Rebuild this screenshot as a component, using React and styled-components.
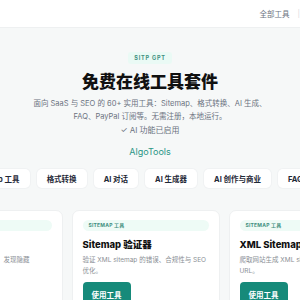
import React from "react";
import styled, { createGlobalStyle } from "styled-components";

const GlobalStyle = createGlobalStyle`
  html, body {
    margin: 0;
    padding: 0;
    background: #f6f8f8;
    font-family: Inter, "Noto Sans CJK SC", sans-serif;
    color: #111827;
  }
  #root {
    overflow: hidden;
    width: 300px;
    height: 300px;
  }
`;

const Header = styled.header`
  height: 27px;
  background: #ffffff;
  border-bottom: 1px solid #eef0f1;
  display: flex;
  align-items: center;
  justify-content: flex-end;
  gap: 8px;
  overflow: hidden;
`;

const NavLink = styled.a`
  font-size: 7.5px;
  color: ${(p) => (p.faint ? "#dadde0" : "#6b7280")};
  text-decoration: none;
  white-space: nowrap;
`;

const Hero = styled.section`
  display: flex;
  flex-direction: column;
  align-items: center;
  padding-top: 24px;
`;

const Badge = styled.span`
  background: #eafaf5;
  color: #3f8f80;
  font-size: 5.5px;
  font-weight: 700;
  letter-spacing: 0.8px;
  padding: 3px 6px;
  border-radius: 3px;
`;

const Title = styled.h1`
  margin: 4px 0 0;
  font-size: 17px;
  font-weight: 800;
  color: #111111;
`;

const Subtitle = styled.p`
  margin: 5px 0 0;
  max-width: 242px;
  text-align: center;
  font-size: 7.5px;
  line-height: 12.5px;
  color: #6b7280;
`;

const Status = styled.div`
  margin-top: 1px;
  font-size: 8px;
  color: #6b7280;
`;

const Brand = styled.div`
  margin-top: 11px;
  font-size: 9px;
  color: #2a9686;
`;

const TabRow = styled.nav`
  margin-top: 12px;
  display: flex;
  justify-content: center;
  gap: 7px;
  white-space: nowrap;
`;

const Tab = styled.button`
  flex: none;
  border: none;
  background: #ffffff;
  border-radius: 5px;
  box-shadow: 0 0 0 1px #f0f2f3;
  height: 19px;
  padding: 0 10px;
  font-family: inherit;
  font-size: 7.5px;
  font-weight: 700;
  color: #1f2937;
`;

const CardRow = styled.div`
  margin-top: 22px;
  display: flex;
  justify-content: center;
  gap: 9px;
  padding-right: 9px;
`;

const Card = styled.article`
  flex: none;
  width: 148px;
  box-sizing: border-box;
  background: #ffffff;
  border: 1px solid #eef0f1;
  border-radius: 7px;
  padding: 9px 10px 12px;
`;

const Tag = styled.div`
  background: #eefbf6;
  color: #3f8f80;
  font-size: 5px;
  font-weight: 700;
  height: 11px;
  line-height: 11px;
  padding: 0 6px;
  border-radius: 6px;
  letter-spacing: 0.2px;
`;

const CardTitle = styled.h3`
  margin: 6px 0 0;
  font-size: 9.5px;
  font-weight: 800;
  color: #111111;
  white-space: nowrap;
`;

const CardDesc = styled.p`
  margin: 4px 0 0;
  font-size: 6.5px;
  line-height: 11px;
  color: #8b9096;
  min-height: 22px;
`;

const UseButton = styled.button`
  margin-top: 5px;
  border: none;
  background: #168a7a;
  color: #ffffff;
  font-family: inherit;
  font-size: 7.5px;
  font-weight: 700;
  height: 24px;
  padding: 0 9px;
  border-radius: 4px;
`;

const tabs = ["Sitemap 工具", "格式转换", "AI 对话", "AI 生成器", "AI 创作与商业", "FAQ 生成器"];

const cards = [
  {
    tag: "SITEMAP 工具",
    title: "Sitemap 分析器",
    desc: "自动查找并解析 sitemap，发现隐藏",
  },
  {
    tag: "SITEMAP 工具",
    title: "Sitemap 验证器",
    desc: "验证 XML sitemap 的错误、合规性与 SEO 优化。",
  },
  {
    tag: "SITEMAP 工具",
    title: "XML Sitemap 生成器",
    desc: "爬取网站生成 XML sitemap，收录全部 URL。",
  },
];

export default function App() {
  return (
    <>
      <GlobalStyle />
      <Header>
        <NavLink href="#">全部工具</NavLink>
        <NavLink href="#" faint>
          |
        </NavLink>
      </Header>
      <Hero>
        <Badge>SITP GPT</Badge>
        <Title>免费在线工具套件</Title>
        <Subtitle>
          面向 SaaS 与 SEO 的 60+ 实用工具：Sitemap、格式转换、AI 生成、FAQ、PayPal 订阅等。无需注册，本地运行。
        </Subtitle>
        <Status>✓ AI 功能已启用</Status>
        <Brand>AlgoTools</Brand>
      </Hero>
      <TabRow>
        {tabs.map((t) => (
          <Tab key={t}>{t}</Tab>
        ))}
      </TabRow>
      <CardRow>
        {cards.map((c) => (
          <Card key={c.title}>
            <Tag>{c.tag}</Tag>
            <CardTitle>{c.title}</CardTitle>
            <CardDesc>{c.desc}</CardDesc>
            <UseButton>使用工具</UseButton>
          </Card>
        ))}
      </CardRow>
    </>
  );
}
